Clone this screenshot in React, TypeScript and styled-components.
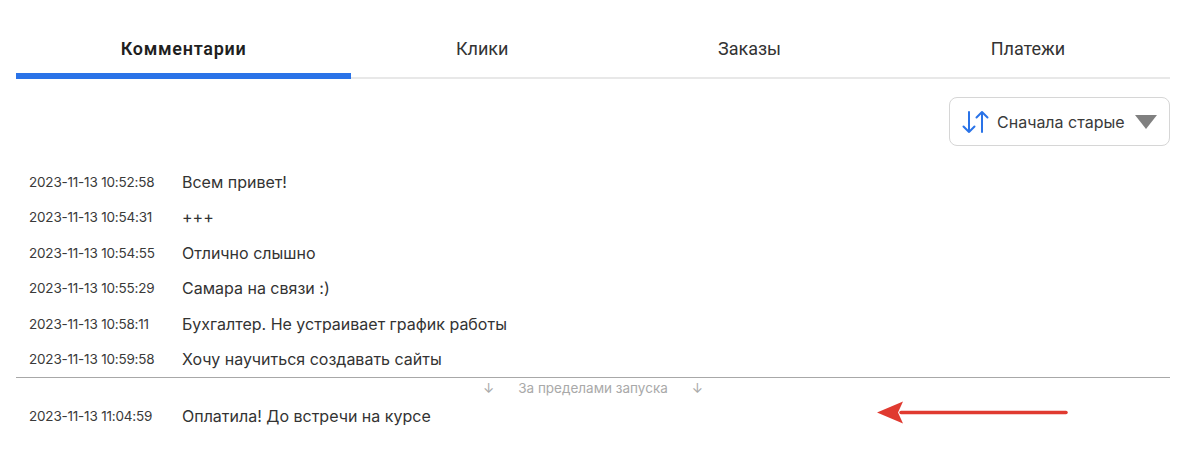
import styled, { createGlobalStyle } from "styled-components";

const GlobalStyle = createGlobalStyle`
    body {
        margin: 0;
        background: #ffffff;
        font-family: Inter, "Noto Sans", sans-serif;
        color: #333333;
    }
`;

const Page = styled.div`
    padding: 16px 30px 0 16px;
`;

const TabBar = styled.div`
    display: flex;
    border-bottom: 2px solid #e8e8e8;
`;

const Tab = styled.div<{ $active?: boolean }>`
    flex: 1 1 auto;
    position: relative;
    height: 61px;
    padding-top: 4px;
    box-sizing: border-box;
    display: flex;
    align-items: center;
    justify-content: center;
    font-family: Roboto, sans-serif;
    font-size: 18px;
    font-weight: ${(p) => (p.$active ? 600 : 400)};
    letter-spacing: ${(p) => (p.$active ? "0.7px" : "0")};
    color: ${(p) => (p.$active ? "#1f1f1f" : "#333333")};

    &::after {
        content: "";
        display: ${(p) => (p.$active ? "block" : "none")};
        position: absolute;
        left: 0;
        right: 0;
        bottom: -2px;
        height: 6px;
        background: #2a73e8;
    }
`;

const Toolbar = styled.div`
    display: flex;
    justify-content: flex-end;
    margin-top: 18px;
`;

const SortButton = styled.button`
    display: flex;
    align-items: center;
    width: 221px;
    height: 49px;
    padding: 0 12px;
    gap: 8px;
    background: #ffffff;
    border: 1px solid #d6d6d6;
    border-radius: 8px;
    font-family: Inter, sans-serif;
    font-size: 16px;
    color: #3a3a3a;
    white-space: nowrap;

    svg {
        flex: none;
    }
`;

const Caret = styled.span`
    flex: none;
    width: 0;
    height: 0;
    margin-left: 2px;
    border-left: 11px solid transparent;
    border-right: 11px solid transparent;
    border-top: 14px solid #808080;
`;

const List = styled.div`
    margin-top: 18px;
`;

const Row = styled.div`
    position: relative;
    display: flex;
    align-items: center;
    height: 35.5px;
`;

const Time = styled.span`
    width: 166px;
    padding-left: 13px;
    box-sizing: border-box;
    font-size: 13.5px;
    color: #3a3a3a;
    letter-spacing: -0.2px;
`;

const Message = styled.span`
    font-size: 16px;
    color: #333333;
`;

const Divider = styled.div`
    height: 1px;
    background: #a8a8a8;
`;

const Boundary = styled.div`
    display: flex;
    justify-content: center;
    align-items: center;
    gap: 24px;
    height: 20.5px;
    font-size: 13.5px;
    color: #a9a9a9;
`;

const RedArrow = styled.svg`
    position: absolute;
    left: 843px;
    top: 1px;
`;

const comments = [
    ["2023-11-13 10:52:58", "Всем привет!"],
    ["2023-11-13 10:54:31", "+++"],
    ["2023-11-13 10:54:55", "Отлично слышно"],
    ["2023-11-13 10:55:29", "Самара на связи :)"],
    ["2023-11-13 10:58:11", "Бухгалтер. Не устраивает график работы"],
    ["2023-11-13 10:59:58", "Хочу научиться создавать сайты"],
];

const SortIcon = () => (
    <svg width="27" height="26" viewBox="0 0 27 26" fill="none" stroke="#2a73e8" strokeWidth="2" strokeLinecap="round" strokeLinejoin="round">
        <path d="M7 3 V23 M1.5 17.5 L7 23 L12.5 17.5" />
        <path d="M20 23 V3 M14.5 8.5 L20 3 L25.5 8.5" />
    </svg>
);

const App = () => {
    return (
        <Page>
            <GlobalStyle />
            <TabBar>
                <Tab $active>Комментарии</Tab>
                <Tab>Клики</Tab>
                <Tab>Заказы</Tab>
                <Tab>Платежи</Tab>
            </TabBar>
            <Toolbar>
                <SortButton type="button">
                    <SortIcon />
                    <span>Сначала старые</span>
                    <Caret />
                </SortButton>
            </Toolbar>
            <List>
                {comments.map(([time, text]) => (
                    <Row key={time}>
                        <Time>{time}</Time>
                        <Message>{text}</Message>
                    </Row>
                ))}
                <Divider />
                <Boundary>
                    <span>↓</span>
                    <span>За пределами запуска</span>
                    <span>↓</span>
                </Boundary>
                <Row>
                    <Time>2023-11-13 11:04:59</Time>
                    <Message>Оплатила! До встречи на курсе</Message>
                    <RedArrow width="212" height="26" viewBox="0 0 212 26">
                        <path d="M42 12.5 H207" stroke="#e03a30" strokeWidth="3.5" strokeLinecap="round" />
                        <path d="M18 12.5 L44 1.5 L39 12.5 L44 23.5 Z" fill="#e03a30" />
                    </RedArrow>
                </Row>
            </List>
        </Page>
    );
};

export default App;
